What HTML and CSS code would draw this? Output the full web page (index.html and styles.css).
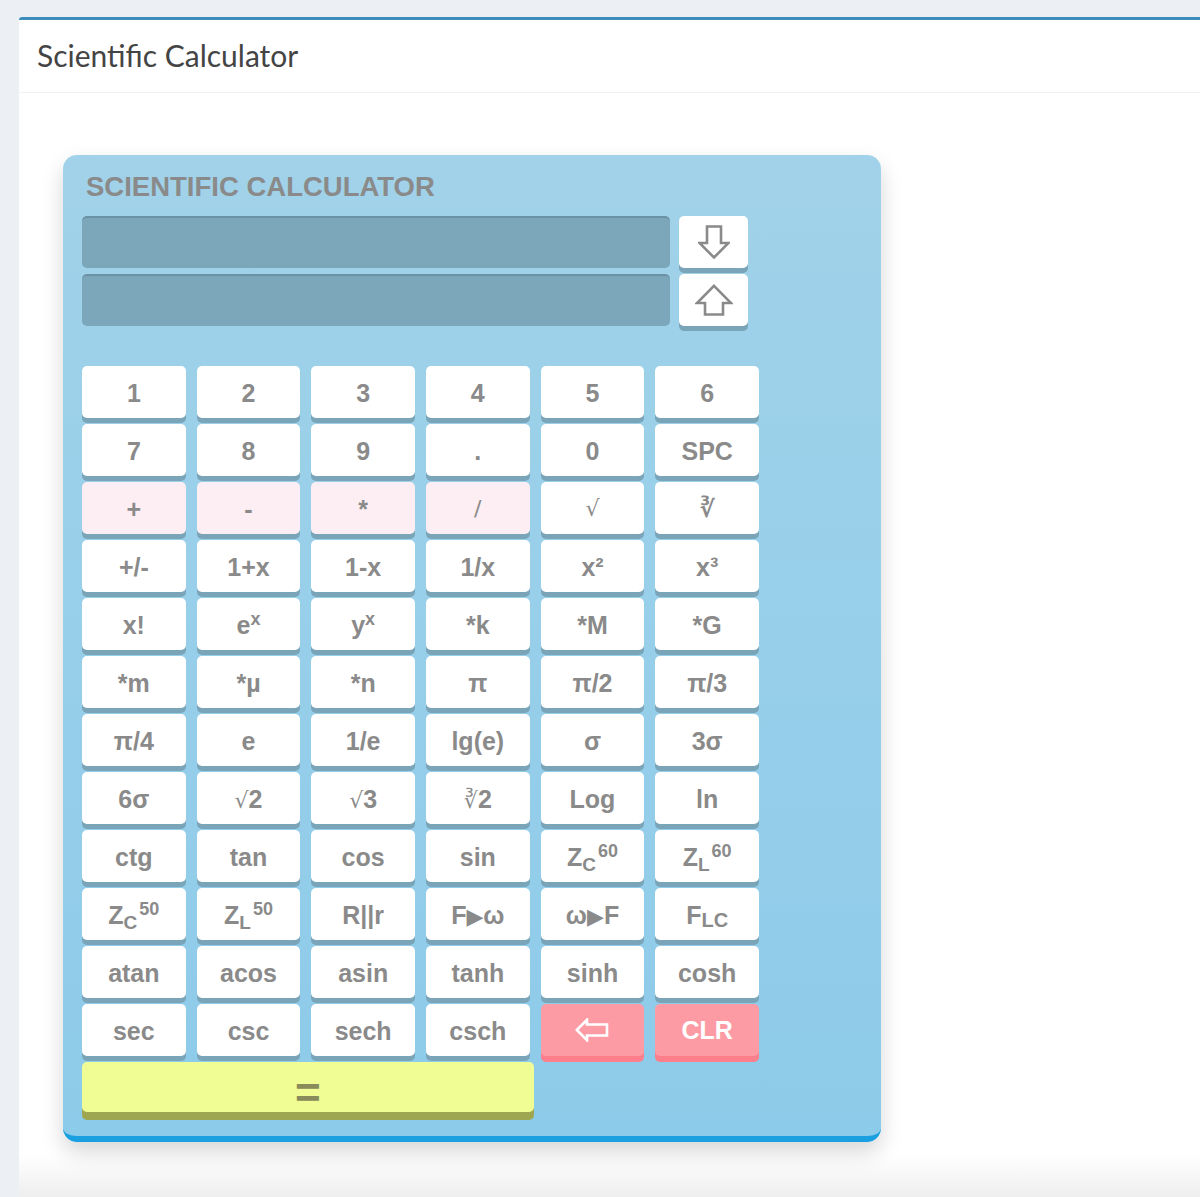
FILE: index.html
```html
<!DOCTYPE html>
<html lang="en">
<head>
    <meta charset="UTF-8">
    <meta name="viewport" content="width=device-width, initial-scale=1.0">
    <title>Scientific Calculator</title>
    <link rel="stylesheet" href="styles.css">
</head>
<body>
    <div class="box">
        <div class="box-header">
            <h3 class="box-title">Scientific Calculator</h3>
        </div>
        <div class="box-body">
            <div class="calculator">
                <div class="calc-title">SCIENTIFIC CALCULATOR</div>

                <div class="calc-top">
                    <div class="screens">
                        <div class="screen"></div>
                        <div class="screen"></div>
                    </div>
                    <div class="arrows">
                        <button class="key arrow" aria-label="Down">
                            <svg width="32" height="34" viewBox="0 0 32 34"><polygon points="9,1.5 23,1.5 23,18 30.5,18 16,32.5 1.5,18 9,18" fill="none" stroke="#8a8a8a" stroke-width="2.6" stroke-linejoin="miter"/></svg>
                        </button>
                        <button class="key arrow" aria-label="Up">
                            <svg width="38" height="32" viewBox="0 0 38 32"><polygon points="19,1.8 36,19 28,19 28,30.5 10,30.5 10,19 2,19" fill="none" stroke="#8a8a8a" stroke-width="2.6" stroke-linejoin="miter"/></svg>
                        </button>
                    </div>
                </div>

                <div class="keys">
                    <button class="key">1</button>
                    <button class="key">2</button>
                    <button class="key">3</button>
                    <button class="key">4</button>
                    <button class="key">5</button>
                    <button class="key">6</button>

                    <button class="key">7</button>
                    <button class="key">8</button>
                    <button class="key">9</button>
                    <button class="key">.</button>
                    <button class="key">0</button>
                    <button class="key">SPC</button>

                    <button class="key op">+</button>
                    <button class="key op">-</button>
                    <button class="key op">*</button>
                    <button class="key op thin">/</button>
                    <button class="key thin">&radic;</button>
                    <button class="key root">&#8731;</button>

                    <button class="key">+/-</button>
                    <button class="key">1+x</button>
                    <button class="key">1-x</button>
                    <button class="key">1/x</button>
                    <button class="key">x&sup2;</button>
                    <button class="key">x&sup3;</button>

                    <button class="key">x!</button>
                    <button class="key">e<sup>x</sup></button>
                    <button class="key">y<sup>x</sup></button>
                    <button class="key">*k</button>
                    <button class="key">*M</button>
                    <button class="key">*G</button>

                    <button class="key">*m</button>
                    <button class="key">*&micro;</button>
                    <button class="key">*n</button>
                    <button class="key">&pi;</button>
                    <button class="key">&pi;/2</button>
                    <button class="key">&pi;/3</button>

                    <button class="key">&pi;/4</button>
                    <button class="key">e</button>
                    <button class="key">1/e</button>
                    <button class="key">lg(e)</button>
                    <button class="key">&sigma;</button>
                    <button class="key">3&sigma;</button>

                    <button class="key">6&sigma;</button>
                    <button class="key"><span class="rad">&radic;</span>2</button>
                    <button class="key"><span class="rad">&radic;</span>3</button>
                    <button class="key"><span class="rad">&#8731;</span>2</button>
                    <button class="key">Log</button>
                    <button class="key">ln</button>

                    <button class="key">ctg</button>
                    <button class="key">tan</button>
                    <button class="key">cos</button>
                    <button class="key">sin</button>
                    <button class="key">Z<sub>C</sub><sup>60</sup></button>
                    <button class="key">Z<sub>L</sub><sup>60</sup></button>

                    <button class="key">Z<sub>C</sub><sup>50</sup></button>
                    <button class="key">Z<sub>L</sub><sup>50</sup></button>
                    <button class="key">R||r</button>
                    <button class="key">F<span class="tri">&#9654;</span>&omega;</button>
                    <button class="key">&omega;<span class="tri">&#9654;</span>F</button>
                    <button class="key">F<span class="low">LC</span></button>

                    <button class="key">atan</button>
                    <button class="key">acos</button>
                    <button class="key">asin</button>
                    <button class="key">tanh</button>
                    <button class="key">sinh</button>
                    <button class="key">cosh</button>

                    <button class="key">sec</button>
                    <button class="key">csc</button>
                    <button class="key">sech</button>
                    <button class="key">csch</button>
                    <button class="key danger" aria-label="Backspace">
                        <svg width="34" height="24" viewBox="0 0 34 24"><polygon points="1.8,12 12,1.8 12,6.5 32,6.5 32,17.5 12,17.5 12,22.2" fill="none" stroke="#fff" stroke-width="2.6"/></svg>
                    </button>
                    <button class="key danger">CLR</button>

                    <button class="key equals">=</button>
                </div>
            </div>
        </div>
    </div>
</body>
</html>
```

FILE: styles.css
```css
html, body {
    margin: 0;
    height: 100%;
}

body {
    background: #ecf0f5;
    padding: 17px 0 0 19px;
    box-sizing: border-box;
    overflow: hidden;
    font-family: "Liberation Sans", Arial, sans-serif;
}

.box {
    height: 1180px;
    border-top: 3px solid #3c8dbc;
    border-radius: 3px 0 0 0;
    background: linear-gradient(to bottom, #fff calc(100% - 46px), #ededed 100%);
}

.box-header {
    padding: 18px 18px 19px;
    border-bottom: 1px solid #f2f2f2;
}

.box-title {
    margin: 0;
    font-family: Lato, "Open Sans", sans-serif;
    font-weight: 400;
    font-size: 30px;
    line-height: 35px;
    color: #444;
}

.box-body {
    padding: 62px 0 0 44px;
}

.calculator {
    width: 818px;
    box-sizing: border-box;
    padding: 17px 19px 22px;
    background: linear-gradient(to bottom, #a1d2e9, #8dcbea);
    border-bottom: 6px solid #1a9fe0;
    border-radius: 14px;
    box-shadow: 0 10px 22px rgba(0, 0, 0, 0.16);
}

.calc-title {
    font-size: 27.5px;
    line-height: 30px;
    font-weight: bold;
    color: #8a8a8a;
    padding-left: 4px;
    margin-bottom: 14px;
}

.calc-top {
    display: flex;
    gap: 9px;
}

.screens {
    width: 588px;
    display: flex;
    flex-direction: column;
    gap: 6px;
}

.screen {
    height: 52px;
    box-sizing: border-box;
    background: #7ca6ba;
    border-top: 2px solid #6a91a4;
    border-radius: 5px;
}

.arrows {
    width: 69px;
    display: flex;
    flex-direction: column;
    gap: 6px;
}

.key {
    height: 52px;
    padding: 0;
    border: none;
    border-radius: 5px;
    background: #fff;
    box-shadow: 0 5px 0 #7aa5b9;
    font-family: "Liberation Sans", Arial, sans-serif;
    font-size: 25px;
    font-weight: bold;
    color: #8a8a8a;
    line-height: 54px;
    text-align: center;
    cursor: pointer;
    white-space: nowrap;
}

.key svg {
    display: block;
    margin: 0 auto;
}

.arrow {
    display: flex;
    align-items: center;
    justify-content: center;
}

.keys {
    width: 677px;
    margin-top: 40px;
    display: grid;
    grid-template-columns: repeat(6, 1fr);
    grid-auto-rows: 52px;
    gap: 6px 11px;
}

.op {
    background: #fdeef3;
}

.thin {
    font-weight: normal;
    font-family: "DejaVu Sans", sans-serif;
    font-size: 22px;
}

.root {
    font-family: "DejaVu Sans", sans-serif;
    font-size: 23px;
}

.rad {
    font-family: "DejaVu Sans", sans-serif;
    font-weight: normal;
    font-size: 22px;
}

.key sup {
    font-size: 18px;
    vertical-align: 9px;
    line-height: 0;
}

.key sub {
    font-size: 19px;
    vertical-align: -5px;
    line-height: 0;
}

.key sub + sup {
    margin-left: 2px;
}

.tri {
    font-family: "DejaVu Sans", sans-serif;
    font-size: 22px;
}

.low {
    font-size: 20px;
    vertical-align: -3px;
}

.danger {
    background: #fd9ba5;
    box-shadow: 0 6px 0 #fc7f8b;
    color: #fff;
    display: flex;
    align-items: center;
    justify-content: center;
}

.equals {
    grid-column: span 4;
    height: 50px;
    line-height: 62px;
    margin-right: -4px;
    background: #f0fd95;
    box-shadow: 0 8px 0 #9fa652;
    color: #898b5a;
    font-size: 44px;
}
```
